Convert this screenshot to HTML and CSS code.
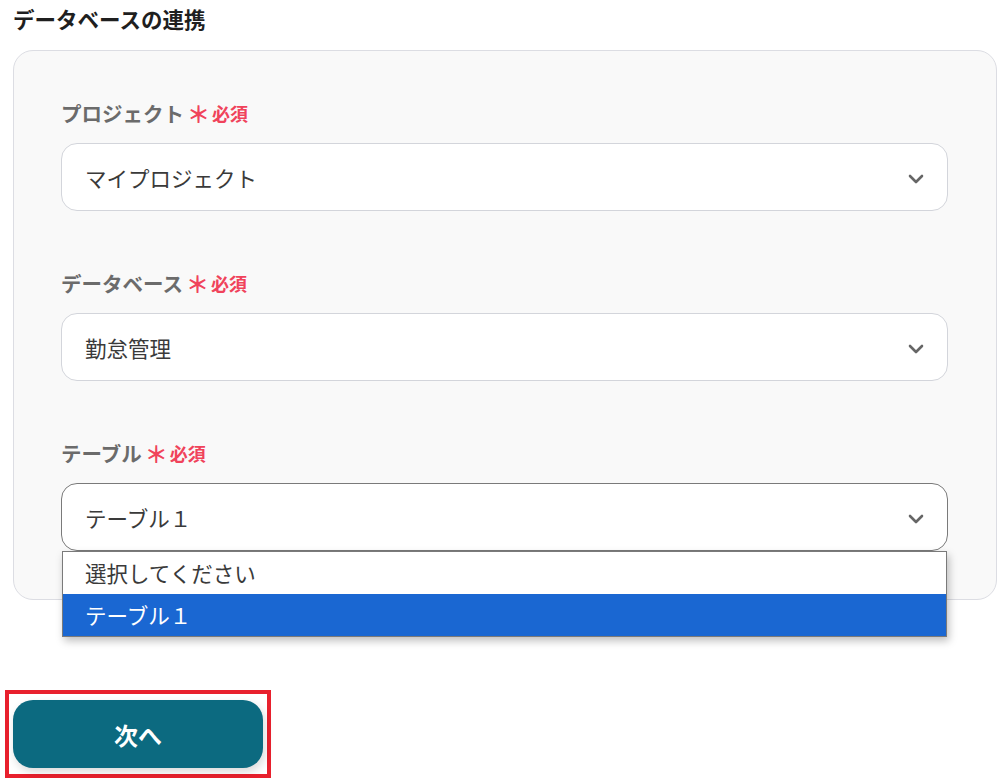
FILE: index.html
```html
<!DOCTYPE html>
<html lang="ja">
<head>
    <meta charset="UTF-8">
    <meta name="viewport" content="width=device-width, initial-scale=1.0">
    <title>データベースの連携</title>
    <link rel="stylesheet" href="styles.css">
</head>
<body>
    <h2 class="section-title">データベースの連携</h2>
    <div class="panel">
        <div class="field">
            <div class="field-label">プロジェクト<span class="req"><span class="star">＊</span>必須</span></div>
            <div class="select">
                <span>マイプロジェクト</span>
                <svg class="chevron" width="16" height="10" viewBox="0 0 16 10"><path d="M2 2 L8 8 L14 2" fill="none" stroke="#666" stroke-width="2.6" stroke-linecap="round" stroke-linejoin="round"/></svg>
            </div>
        </div>
        <div class="field">
            <div class="field-label">データベース<span class="req"><span class="star">＊</span>必須</span></div>
            <div class="select">
                <span>勤怠管理</span>
                <svg class="chevron" width="16" height="10" viewBox="0 0 16 10"><path d="M2 2 L8 8 L14 2" fill="none" stroke="#666" stroke-width="2.6" stroke-linecap="round" stroke-linejoin="round"/></svg>
            </div>
        </div>
        <div class="field last">
            <div class="field-label">テーブル<span class="req"><span class="star">＊</span>必須</span></div>
            <div class="select open">
                <span>テーブル１</span>
                <svg class="chevron" width="16" height="10" viewBox="0 0 16 10"><path d="M2 2 L8 8 L14 2" fill="none" stroke="#666" stroke-width="2.6" stroke-linecap="round" stroke-linejoin="round"/></svg>
                <ul class="options">
                    <li>選択してください</li>
                    <li class="active">テーブル１</li>
                </ul>
            </div>
        </div>
    </div>
    <div class="actions">
        <div class="highlight">
            <button class="next">次へ</button>
        </div>
    </div>
</body>
</html>
```

FILE: styles.css
```css
body {
    margin: 0;
    padding: 0 10px 0 13px;
    font-family: "Noto Sans CJK JP", "Noto Sans", sans-serif;
    background: #fff;
    color: #333;
}

.section-title {
    margin: 0;
    padding-top: 4px;
    height: 46px;
    font-size: 21.5px;
    line-height: 30px;
    font-weight: 700;
    color: #1f1f1f;
}

.panel {
    box-sizing: border-box;
    width: 984px;
    height: 550px;
    padding: 50px 48px 0 47px;
    background: #f9f9f9;
    border: 1px solid #dcdde3;
    border-radius: 20px;
}

.field {
    margin-bottom: 60px;
}

.field-label {
    display: flex;
    align-items: center;
    height: 24px;
    margin-bottom: 18px;
    font-size: 20.5px;
    font-weight: 700;
    color: #6b6b6b;
}

.req {
    display: flex;
    align-items: center;
    margin-left: 3px;
    font-size: 18px;
    color: #f0435b;
}

.star {
    font-size: 23px;
    margin-right: 2px;
}

.select {
    position: relative;
    box-sizing: border-box;
    display: flex;
    align-items: center;
    justify-content: space-between;
    height: 68px;
    padding: 0 23px 0 23px;
    background: #fff;
    border: 1px solid #d3d5db;
    border-radius: 16px;
    font-size: 21.5px;
    color: #3a3a3a;
}

.select.open {
    border-color: #7a7a7a;
}

.chevron {
    margin-top: 4px;
}

.options {
    position: absolute;
    top: 67px;
    left: 0;
    right: 0;
    margin: 0;
    padding: 0;
    list-style: none;
    background: #fff;
    border: 1px solid #7a7a7a;
    box-shadow: 2px 4px 8px rgba(0, 0, 0, 0.25);
    z-index: 10;
}

.options li {
    height: 42px;
    line-height: 42px;
    padding-left: 22px;
    font-size: 21.5px;
    color: #3a3a3a;
}

.options li.active {
    background: #1a67d2;
    color: #fff;
}

.actions {
    padding-top: 90px;
    margin-left: -8px;
}

.highlight {
    display: inline-block;
    padding: 6px 4px 6px 4px;
    border: 4px solid #e8202d;
}

.next {
    display: block;
    width: 250px;
    height: 68px;
    border: none;
    border-radius: 20px;
    background: #0c6a80;
    color: #fff;
    font-family: inherit;
    font-size: 24px;
    font-weight: 700;
    box-shadow: 2px 4px 10px rgba(0, 0, 0, 0.15);
    cursor: pointer;
}
```
